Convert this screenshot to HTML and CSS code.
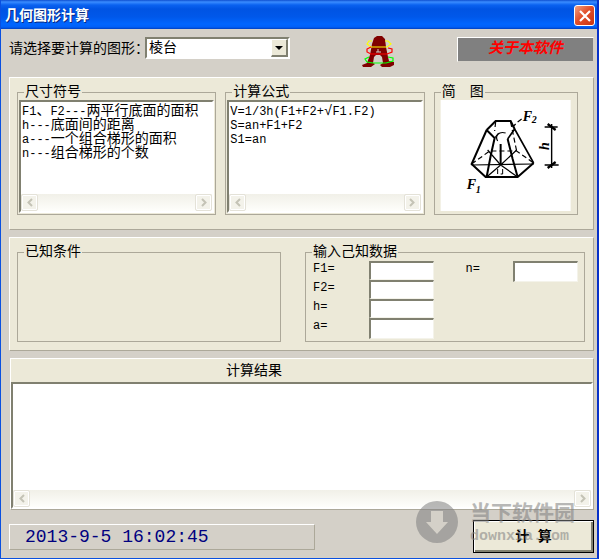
FILE: index.html
```html
<!DOCTYPE html>
<html lang="zh-CN">
<head>
<meta charset="utf-8">
<title>几何图形计算</title>
<link rel="stylesheet" href="styles.css">
</head>
<body>
<main class="window">
  <header class="titlebar">
    <h1>几何图形计算</h1>
    <button class="close" type="button" aria-label="关闭">
      <svg viewBox="0 0 12 12" width="12" height="12"><path d="M1 1 L11 11 M11 1 L1 11" stroke="#fff" stroke-width="2.2" fill="none"/></svg>
    </button>
  </header>

  <div class="client">
    <div class="toolbar">
      <label for="shape">请选择要计算的图形：</label>
      <div class="combo">
        <select id="shape"><option>棱台</option></select>
        <span class="combo-arrow"><svg viewBox="0 0 8 4" width="8" height="4"><path d="M0 0 H8 L4 4 Z"/></svg></span>
      </div>
      <svg class="logo" viewBox="0 0 34 34" width="34" height="34" aria-hidden="true">
        <path d="M13 3 L16 1 H21 L24 4 L25 12 L27 22 L28 26 L33 27 V30 L29 32 H21 L19 30 L22 28 L21 22 L19 20 H15 L13 22 L12 28 L14 29 L10 32 H2 L1 30 L6 28 L9 20 L11 9 Z" fill="#800000"/>
        <path d="M15 17 H20 M17 14 V17" stroke="#d4d0c8"/>
        <path d="M11 6 H8 L6 9 L10 12 H26 L30 9 L27 6 H24" stroke="#ff0" fill="none" stroke-width="1.2"/>
        <path d="M10 12 L6 14 V17 L10 19 H26 L31 17 V14 L27 13" stroke="#f00" fill="none" stroke-width="1.2"/>
        <path d="M8 22 L4 24 L6 27 L12 28 H25 L32 26 V23 L27 22" stroke="#0f0" fill="none" stroke-width="1.2"/>
      </svg>
      <button class="about" type="button">关于本软件</button>
    </div>

    <section class="panel info">
      <fieldset class="group">
        <legend>尺寸符号</legend>
        <div class="memo">
          <ul class="lines">
            <li><span class="en">F1</span>、<span class="en">F2---</span>两平行底面的面积</li>
            <li><span class="en">h---</span>底面间的距离</li>
            <li><span class="en">a---</span>一个组合梯形的面积</li>
            <li><span class="en">n---</span>组合梯形的个数</li>
          </ul>
          <div class="scrollbar">
            <button type="button" disabled aria-label="向左"><svg viewBox="0 0 6 9" width="6" height="9"><path d="M5 1 L1.5 4.5 L5 8"/></svg></button>
            <button type="button" disabled aria-label="向右"><svg viewBox="0 0 6 9" width="6" height="9"><path d="M1 1 L4.5 4.5 L1 8"/></svg></button>
          </div>
        </div>
      </fieldset>
      <fieldset class="group">
        <legend>计算公式</legend>
        <div class="memo">
          <ul class="lines">
            <li><span class="en">V=1/3h(F1+F2+</span>√<span class="en">F1.F2)</span></li>
            <li><span class="en">S=an+F1+F2</span></li>
            <li><span class="en">S1=an</span></li>
          </ul>
          <div class="scrollbar">
            <button type="button" disabled aria-label="向左"><svg viewBox="0 0 6 9" width="6" height="9"><path d="M5 1 L1.5 4.5 L5 8"/></svg></button>
            <button type="button" disabled aria-label="向右"><svg viewBox="0 0 6 9" width="6" height="9"><path d="M1 1 L4.5 4.5 L1 8"/></svg></button>
          </div>
        </div>
      </fieldset>
      <fieldset class="group sketch">
        <legend>简　图</legend>
        <svg viewBox="0 0 130 111" role="img" aria-label="棱台简图">
          <rect width="130" height="111" fill="#fff"/>
          <g fill="none" stroke="#000">
            <path stroke-width="2" d="M46 30 L55 21 H70 L74 29 M46 30 L31 64 L45 77 H77 L93 63 M46 30 L54 38 L50 56 L46 77 M67 39 L72 59 L77 77"/>
            <path stroke-width="1.6" d="M74 29 L93 63 M74 29 L67 39"/>
            <path stroke-width="1.2" d="M54 38 L58 33 M31 65 L93 64 M60 65 L46 77 M60 65 L77 77 M60 65 L47 50 M60 65 L76 50"/>
            <path stroke-width="2" d="M60 65 V44"/>
            <path stroke-width="1.2" stroke-dasharray="5 3" d="M55 22 L54 31 M31 64 L49 51 H76 L93 63 M70 22 L76 51"/>
            <path stroke-width="1.2" d="M57 41 C54 36 58 31 65 33"/>
            <path stroke-width="1.2" d="M72 27 L75 24 M77 22 L81 19"/>
            <path d="M57 69 V74 M62 69 V74 H60"/>
            <path d="M111 24 V68 M104 27 H117 M104 65 H118" stroke-width="1.4"/>
            <path d="M107 24 L115 30 M107 68 L115 62" stroke-width="2.2"/>
          </g>
          <g class="mark">
            <text x="82" y="21" font-size="14">F</text><text x="91" y="23" font-size="10">2</text>
            <text x="26" y="89" font-size="14">F</text><text x="35" y="93" font-size="10">1</text>
            <text transform="translate(108 50) rotate(-90)" font-size="14">h</text>
          </g>
        </svg>
      </fieldset>
    </section>

    <section class="panel data">
      <fieldset class="group known"><legend>已知条件</legend></fieldset>
      <fieldset class="group entry">
        <legend>输入己知数据</legend>
        <div class="fields">
          <div class="field"><label for="f1">F1=</label><input id="f1" type="text"></div>
          <div class="field"><label for="f2">F2=</label><input id="f2" type="text"></div>
          <div class="field"><label for="h">h=</label><input id="h" type="text"></div>
          <div class="field"><label for="a">a=</label><input id="a" type="text"></div>
        </div>
        <div class="fields">
          <div class="field"><label for="n">n=</label><input id="n" type="text"></div>
        </div>
      </fieldset>
    </section>

    <section class="panel result">
      <label class="result-title" for="result">计算结果</label>
      <div class="memo">
        <textarea id="result"></textarea>
        <div class="scrollbar">
          <button type="button" disabled aria-label="向左"><svg viewBox="0 0 6 9" width="6" height="9"><path d="M5 1 L1.5 4.5 L5 8"/></svg></button>
          <button type="button" disabled aria-label="向右"><svg viewBox="0 0 6 9" width="6" height="9"><path d="M1 1 L4.5 4.5 L1 8"/></svg></button>
        </div>
      </div>
    </section>

    <footer class="bottom">
      <time class="clock" datetime="2013-09-05T16:02:45">2013-9-5 16:02:45</time>
      <button class="calc" type="button">计 算</button>
    </footer>
  </div>

  <div class="watermark">
    <svg viewBox="0 0 42 42" width="42" height="42" aria-hidden="true"><path fill-rule="evenodd" d="M21 0 A21 21 0 1 1 21 42 A21 21 0 1 1 21 0 Z M15 10 H27 V21 H32 L21 33 L10 21 H15 Z"/></svg>
    <div><strong>当下软件园</strong><span>downxia.com</span></div>
  </div>
</main>
</body>
</html>
```

FILE: styles.css
```css
* { box-sizing: border-box; }

body {
  margin: 0;
  font: 14px/16px "Liberation Mono", "Noto Sans CJK SC", monospace;
  color: #000;
}

button, input, select, textarea { font: inherit; color: inherit; margin: 0; border-radius: 0; }

.window {
  position: relative;
  display: flex;
  flex-direction: column;
  min-height: 100vh;
  background: #d4d0c8;
  border: solid #0a50e0;
  border-width: 0 2px 1px 1px;
  border-right-color: #0831c8;
}

.titlebar {
  display: flex;
  align-items: center;
  justify-content: space-between;
  height: 29px;
  padding: 2px 2px 0 4px;
  background: linear-gradient(#0f4fd0 0, #3a8cff 2px, #0a62f0 5px, #0054e3 9px, #0058ea 17px, #0066ff 24px, #0060f8 27px, #0040c0 29px);
}

h1 { margin: 0; font-size: 14px; line-height: 20px; color: #fff; text-shadow: 1px 1px #0a2a80; }

.close {
  display: grid;
  place-items: center;
  width: 21px;
  height: 21px;
  padding: 0;
  border: 1px solid #fff;
  border-radius: 3px;
  background: linear-gradient(135deg, #f0a080, #e2502c 45%, #c83410);
}

.client { flex: 1; display: flex; flex-direction: column; padding: 8px 3px 5px 8px; }

.toolbar { display: flex; align-items: flex-start; height: 40px; }
.toolbar label { line-height: 24px; width: 136px; white-space: nowrap; }

.combo { position: relative; width: 145px; height: 22px; }
.combo select {
  appearance: none;
  width: 100%;
  height: 100%;
  padding: 0 20px 0 2px;
  border: 2px solid;
  border-color: #808070 #fff #fff #808070;
  background: #fff;
  outline: 0;
}
.combo-arrow {
  position: absolute;
  top: 2px;
  right: 2px;
  bottom: 2px;
  width: 17px;
  display: grid;
  place-items: center;
  background: #ece9d8;
  border: solid;
  border-width: 1px 2px 2px 1px;
  border-color: #fff #808070 #808070 #fff;
  pointer-events: none;
}

.logo { margin: -2px auto 0 71px; }

.about {
  width: 137px;
  height: 25px;
  padding: 0;
  border: 1px solid;
  border-color: #fff #d4d0c8 #d4d0c8 #fff;
  background: #808080;
  color: #f00;
  font-size: 15px;
  font-weight: bold;
  font-style: italic;
}

.panel {
  background: #ece9d8;
  border: 1px solid;
  border-color: #fff #aca899 #aca899 #fff;
}

.group {
  min-width: 0;
  margin: 0;
  padding: 0;
  border: 1px solid #aca899;
}
.group legend { margin-left: 6px; padding: 0 1px; }

.info {
  display: grid;
  grid-template-columns: 199fr 199fr 144fr;
  gap: 9px;
  height: 153px;
  padding: 6px 15px 14px 7px;
}

.memo {
  display: flex;
  flex-direction: column;
  background: #fff;
  border: 2px solid;
  border-color: #808070 #fff #fff #808070;
}
.info .memo { height: 113px; margin: 0 1px; }
.lines { flex: 1; margin: 0; padding: 2px 0 0 1px; list-style: none; line-height: 14px; white-space: nowrap; overflow: hidden; }
.lines li { height: 14px; }
.en { font-size: 12px; }

.scrollbar {
  display: flex;
  justify-content: space-between;
  height: 17px;
  background: linear-gradient(#f1f0e8, #fefefb);
}
.scrollbar button {
  display: grid;
  place-items: center;
  width: 17px;
  height: 17px;
  padding: 0;
  border: 1px solid #e4e2d8;
  border-radius: 2px;
  background: #f3f2ea;
  box-shadow: inset 0 0 0 1px #fff;
}
.scrollbar path { fill: none; stroke: #c4c3b6; stroke-width: 2; }

.sketch { padding: 0 6px 0 5px; }
.sketch legend { margin-left: 1px; }
.sketch > svg { display: block; width: 100%; height: 111px; }
.mark { font-family: "Liberation Serif", serif; font-style: italic; font-weight: bold; }

.data {
  display: grid;
  grid-template-columns: 264fr 280fr;
  gap: 24px;
  height: 114px;
  margin-top: 7px;
  padding: 6px 8px 8px 7px;
}
.entry { display: grid; grid-template-columns: 121fr 113fr; gap: 31px; padding: 0 6px; }
.entry legend { margin-left: 0; }
.fields { padding-top: 1px; }
.field { display: flex; justify-content: space-between; height: 19px; }
.field label { font-size: 12px; padding-left: 1px; }
.field input {
  width: 65px;
  height: 19px;
  padding: 0 2px;
  border: solid;
  border-width: 2px 1px 1px 2px;
  border-color: #808070 #f4f3ea #f4f3ea #808070;
  background: #fff;
  outline: 0;
}
.field:last-child input { height: 21px; }

.result { flex: 1; display: flex; flex-direction: column; margin: 7px 0 0 1px; }
.result-title { padding: 4px 0 3px 215px; }
.result .memo { flex: 1; }
.result textarea { flex: 1; width: 100%; min-height: 60px; padding: 2px; border: 0; outline: 0; resize: none; background: #fff; }

.bottom { display: flex; justify-content: space-between; align-items: center; margin-top: 10px; }
.clock {
  width: 306px;
  padding: 0 15px;
  border: 1px solid;
  border-color: #fff #aca899 #aca899 #fff;
  color: #000080;
  font-size: 18px;
  line-height: 24px;
}
.calc {
  width: 121px;
  height: 33px;
  padding: 0;
  border: 1px solid #000;
  background: #ece9d8;
  box-shadow: inset 1px 1px #fff, inset -2px -2px #808070;
  font-weight: bold;
}

.watermark {
  position: absolute;
  right: 22px;
  bottom: 13px;
  display: flex;
  align-items: flex-start;
  gap: 12px;
  color: #808080;
  opacity: 0.55;
  pointer-events: none;
}
.watermark path { fill: #808080; }
.watermark strong { display: block; font-size: 21px; line-height: 28px; }
.watermark span { display: block; font-size: 15px; font-weight: bold; }
```
